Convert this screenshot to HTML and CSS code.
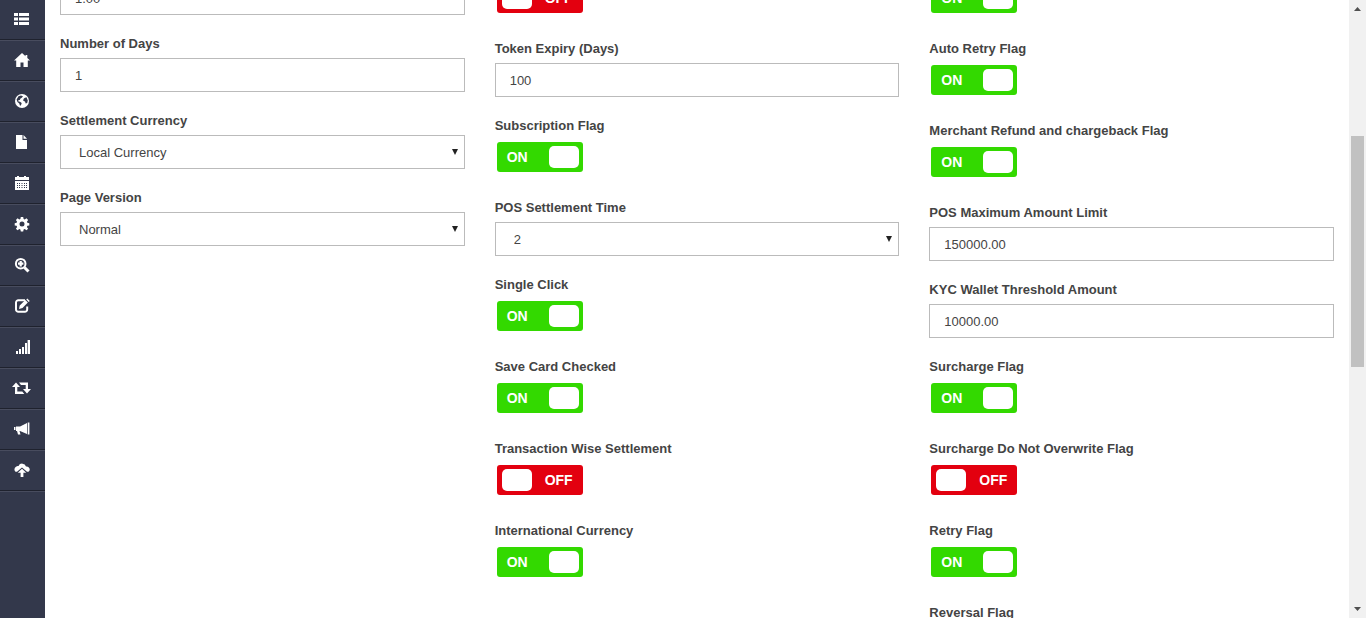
FILE: index.html
```html
<!DOCTYPE html>
<html lang="en">
<head>
<meta charset="utf-8">
<title>Merchant Settings</title>
<link rel="stylesheet" href="styles.css">
</head>
<body>
<div class="app">
  <nav class="sidebar" aria-label="Main">
    <a class="nav-item" href="#list" aria-label="List"><svg class="icon" viewBox="0 0 16 16"><path d="M0 2h4v3H0zM5 2h10v3H5zM0 6.500h4v3H0zM5 6.500h10v3H5zM0 11h4v3H0zM5 11h10v3H5z"/></svg></a>
    <a class="nav-item" href="#home" aria-label="Home"><svg class="icon" viewBox="0 0 16 16"><path d="M8 1L0 8.400h2.200V15h4.300v-4.500h3V15h4.300V8.400H16L13.300 6V3h-1.800v1.300z"/></svg></a>
    <a class="nav-item" href="#globe" aria-label="Regions"><svg class="icon" viewBox="0 0 16 16"><circle cx="8" cy="8" r="7"/><path class="cut" d="M4.500 3.200L7 2.500l2 .8-1.200 1.500-1.300.7-.7 1.500-1.600.3.300 1.200 1.500.2 1.700 1.200-.4 1.500-1.200 1.500-.8-2.500L3.500 9 2.600 6.500zM10.500 5l2-.7 1.300 3.200-.6 2.600-1.500.5-.7-2-1.800-.8.300-1.700z"/></svg></a>
    <a class="nav-item" href="#file" aria-label="Documents"><svg class="icon" viewBox="0 0 16 16"><path d="M2 1h6.500v5H13v9H2z"/><path d="M9.500 1L13 4.800H9.500z"/></svg></a>
    <a class="nav-item" href="#calendar" aria-label="Calendar"><svg class="icon" viewBox="0 0 16 16"><path d="M1 2h2V1h2v1h5V1h2v1h3v3H1zM1 6h14v9H1z"/><path class="cut" d="M3 8h1v1H3zM5 8h1v1H5zM7.500 8h1v1h-1zM10 8h1v1h-1zM12 8h1v1h-1zM3 10h1v1H3zM5 10h1v1H5zM7.500 10h1v1h-1zM10 10h1v1h-1zM12 10h1v1h-1zM3 12h1v1H3zM5 12h1v1H5zM7.500 12h1v1h-1zM10 12h1v1h-1zM12 12h1v1h-1z"/></svg></a>
    <a class="nav-item" href="#settings" aria-label="Settings"><svg class="icon" viewBox="0 0 16 16"><path fill-rule="evenodd" d="M6.800 1h2.400l.4 2 1.100.5 1.800-1.200 1.600 1.700-1.200 1.700.5 1.100 1.900.4v2.200l-1.900.4-.5 1.100 1.200 1.800-1.600 1.600-1.800-1.200-1.100.5-.4 1.900H6.800l-.4-1.900-1.100-.5-1.700 1.200-1.700-1.600 1.200-1.800-.5-1.100-1.900-.4V7.200l1.900-.4.5-1.100L1.900 4l1.700-1.700 1.700 1.200 1.100-.5zM8 5.600a2.500 2.500 0 100 5 2.500 2.500 0 000-5z"/></svg></a>
    <a class="nav-item" href="#search" aria-label="Search"><svg class="icon" viewBox="0 0 16 16"><circle class="stroke" cx="6.700" cy="6.700" r="4.800"/><path class="stroke thick" d="M10.500 10.500l4 4"/><path d="M5.600 4h2.200v1.600h1.600v2.200H7.800v1.600H5.600V7.800H4V5.600h1.600z"/></svg></a>
    <a class="nav-item" href="#edit" aria-label="Edit"><svg class="icon" viewBox="0 0 16 16"><path class="stroke" d="M11 2.200H4.500A2.400 2.400 0 002 4.700v6.600a2.400 2.400 0 002.500 2.500h6.200a2.400 2.400 0 002.500-2.500V8.500"/><path d="M5 11l.7-3.500L11.300 2l2.500 2.500-5.300 5.400zM12.300 1.500l1-.9 2.500 2.400-1.100 1z"/></svg></a>
    <a class="nav-item" href="#reports" aria-label="Reports"><svg class="icon" viewBox="0 0 16 16"><path d="M2 12h2v3H2zM5 10h2v5H5zM8 8h2v7H8zM11 4h2v11h-2zM13 1h3v14h-3z"/><path class="cut" d="M13 1h.6v14H13z"/></svg></a>
    <a class="nav-item" href="#transfers" aria-label="Transfers"><svg class="icon icon-wide" viewBox="0 0 19 16"><path d="M4 2.500L8 7H5.300v4.500h5l2 2.500H3V7H0zM7 2.500h9V9h3l-4 4.500L11 9h2.700V5H9z"/></svg></a>
    <a class="nav-item" href="#campaigns" aria-label="Campaigns"><svg class="icon" viewBox="0 0 16 16"><path d="M0 6h1.500v3H0zM2 5.500h4V10H2zM6 5.500L13 2v11L6 10zM13.700 1.500h1.700v12h-1.700zM3 10h2.500l1 3.500H4z"/></svg></a>
    <a class="nav-item" href="#upload" aria-label="Upload"><svg class="icon" viewBox="0 0 16 16"><path d="M1.500 9.800A3.200 3.200 0 012 4.700 3 3 0 014.500 4 4 4 0 0112 4.500a3 3 0 012.500 5.300H13L8 5.500 3 9.800z"/><path d="M8 6.800l4.200 4H9.400V15H6.600v-4.200H3.800z"/></svg></a>
  </nav>

  <main class="content">
    <form class="form">
      <div class="column">
        <div class="field"><label class="caption" for="rate">Rate</label><input class="control" id="rate" type="text" value="1.00"></div>
        <div class="field"><label class="caption" for="days">Number of Days</label><input class="control" id="days" type="text" value="1"></div>
        <div class="field"><label class="caption" for="currency">Settlement Currency</label>
          <div class="select-box"><select class="control select" id="currency"><option>Local Currency</option></select><svg class="caret" viewBox="0 0 6 6"><path d="M0 0h6L3 6z"/></svg></div></div>
        <div class="field"><label class="caption" for="version">Page Version</label>
          <div class="select-box"><select class="control select" id="version"><option>Normal</option></select><svg class="caret" viewBox="0 0 6 6"><path d="M0 0h6L3 6z"/></svg></div></div>
      </div>

      <div class="column">
        <div class="field toggle-field"><label class="caption" for="token">Token Flag</label>
          <label class="switch"><input class="switch-input" id="token" type="checkbox"><span class="on">ON</span><span class="knob"></span><span class="off">OFF</span></label></div>
        <div class="field"><label class="caption" for="expiry">Token Expiry (Days)</label><input class="control" id="expiry" type="text" value="100"></div>
        <div class="field toggle-field"><label class="caption" for="subscription">Subscription Flag</label>
          <label class="switch"><input class="switch-input" id="subscription" type="checkbox" checked><span class="on">ON</span><span class="knob"></span><span class="off">OFF</span></label></div>
        <div class="field"><label class="caption" for="pos-time">POS Settlement Time</label>
          <div class="select-box"><select class="control select" id="pos-time"><option>2</option></select><svg class="caret" viewBox="0 0 6 6"><path d="M0 0h6L3 6z"/></svg></div></div>
        <div class="field toggle-field"><label class="caption" for="single">Single Click</label>
          <label class="switch"><input class="switch-input" id="single" type="checkbox" checked><span class="on">ON</span><span class="knob"></span><span class="off">OFF</span></label></div>
        <div class="field toggle-field"><label class="caption" for="save-card">Save Card Checked</label>
          <label class="switch"><input class="switch-input" id="save-card" type="checkbox" checked><span class="on">ON</span><span class="knob"></span><span class="off">OFF</span></label></div>
        <div class="field toggle-field"><label class="caption" for="wise">Transaction Wise Settlement</label>
          <label class="switch"><input class="switch-input" id="wise" type="checkbox"><span class="on">ON</span><span class="knob"></span><span class="off">OFF</span></label></div>
        <div class="field toggle-field"><label class="caption" for="international">International Currency</label>
          <label class="switch"><input class="switch-input" id="international" type="checkbox" checked><span class="on">ON</span><span class="knob"></span><span class="off">OFF</span></label></div>
      </div>

      <div class="column">
        <div class="field toggle-field"><label class="caption" for="flag">Flag</label>
          <label class="switch"><input class="switch-input" id="flag" type="checkbox" checked><span class="on">ON</span><span class="knob"></span><span class="off">OFF</span></label></div>
        <div class="field toggle-field"><label class="caption" for="auto-retry">Auto Retry Flag</label>
          <label class="switch"><input class="switch-input" id="auto-retry" type="checkbox" checked><span class="on">ON</span><span class="knob"></span><span class="off">OFF</span></label></div>
        <div class="field toggle-field"><label class="caption" for="refund">Merchant Refund and chargeback Flag</label>
          <label class="switch"><input class="switch-input" id="refund" type="checkbox" checked><span class="on">ON</span><span class="knob"></span><span class="off">OFF</span></label></div>
        <div class="field"><label class="caption" for="pos-max">POS Maximum Amount Limit</label><input class="control" id="pos-max" type="text" value="150000.00"></div>
        <div class="field"><label class="caption" for="kyc">KYC Wallet Threshold Amount</label><input class="control" id="kyc" type="text" value="10000.00"></div>
        <div class="field toggle-field"><label class="caption" for="surcharge">Surcharge Flag</label>
          <label class="switch"><input class="switch-input" id="surcharge" type="checkbox" checked><span class="on">ON</span><span class="knob"></span><span class="off">OFF</span></label></div>
        <div class="field toggle-field"><label class="caption" for="overwrite">Surcharge Do Not Overwrite Flag</label>
          <label class="switch"><input class="switch-input" id="overwrite" type="checkbox"><span class="on">ON</span><span class="knob"></span><span class="off">OFF</span></label></div>
        <div class="field toggle-field"><label class="caption" for="retry">Retry Flag</label>
          <label class="switch"><input class="switch-input" id="retry" type="checkbox" checked><span class="on">ON</span><span class="knob"></span><span class="off">OFF</span></label></div>
        <div class="field toggle-field"><label class="caption" for="reversal">Reversal Flag</label>
          <label class="switch"><input class="switch-input" id="reversal" type="checkbox" checked><span class="on">ON</span><span class="knob"></span><span class="off">OFF</span></label></div>
      </div>
    </form>
  </main>

  <div class="scrollbar" aria-hidden="true">
    <svg class="scroll-arrow" viewBox="0 0 17 17"><path d="M5 11h7L8.500 7z"/></svg>
    <div class="track"><div class="thumb"></div></div>
    <svg class="scroll-arrow" viewBox="0 0 17 17"><path d="M5 6h7L8.500 10z"/></svg>
  </div>
</div>
</body>
</html>
```

FILE: styles.css
```css
* { box-sizing: border-box; }

body {
  margin: 0;
  background: #fff;
  color: #444;
  font: 13px/20px "Liberation Sans", Arial, sans-serif;
}

.app {
  display: flex;
  height: 100vh;
  overflow: hidden;
}

/* Sidebar */
.sidebar {
  flex: 0 0 45px;
  background: #33384b;
}

.nav-item {
  display: flex;
  align-items: center;
  justify-content: center;
  height: 41px;
  padding: 0 2px 2px 0;
  border-top: 1px solid #484c5e;
  border-bottom: 1px solid #1f222e;
}

.nav-item:first-child {
  height: 40px;
  border-top: 0;
}

.nav-item:last-child { box-shadow: 0 1px #484c5e; }

.icon {
  width: 16px;
  height: 16px;
  fill: #fff;
}

.icon-wide { width: 19px; }
.icon .cut { fill: #33384b; }

.icon .stroke {
  fill: none;
  stroke: #fff;
  stroke-width: 2;
}

.icon .thick { stroke-width: 3; }

/* Form, scrolled part of the way down */
.content {
  flex: 1;
  min-width: 0;
  overflow: hidden;
}

.form {
  display: grid;
  grid-template-columns: repeat(3, minmax(0, 1fr));
  gap: 30px;
  margin-top: -44px;
  padding: 0 15px;
}

.field {
  display: flex;
  flex-direction: column;
  gap: 3px;
  margin-bottom: 18px;
}

.toggle-field {
  align-items: flex-start;
  gap: 5px;
  margin-bottom: 25px;
}

.caption {
  font-weight: 700;
  line-height: 22px;
}

.control {
  display: block;
  width: 100%;
  height: 34px;
  padding: 0 14px;
  border: 1px solid #bbb;
  border-radius: 0;
  background: #fff;
  color: #444;
  font: inherit;
}

.select-box { position: relative; }

.select {
  padding: 2px 18px 0;
  appearance: none;
}

.caret {
  position: absolute;
  top: 14px;
  right: 7px;
  width: 6px;
  height: 6px;
  fill: #222;
  pointer-events: none;
}

/* Switch */
.switch {
  display: flex;
  align-items: center;
  justify-content: space-between;
  width: 86px;
  height: 30px;
  margin-left: 2px;
  padding: 0 10px 0 5px;
  border-radius: 3px;
  background: #e3000f;
  color: #fff;
  font-size: 14px;
  font-weight: 700;
}

.switch:has(:checked) {
  padding: 0 4px 0 10px;
  background: #33d900;
}

.switch-input {
  position: absolute;
  opacity: 0;
  pointer-events: none;
}

.knob {
  width: 30px;
  height: 22px;
  border-radius: 5px;
  background: #fff;
}

.on { display: none; }
.switch-input:checked ~ .on { display: block; }
.switch-input:checked ~ .off { display: none; }

/* Scrollbar */
.scrollbar {
  display: flex;
  flex: 0 0 17px;
  flex-direction: column;
  background: #f1f1f1;
}

.scroll-arrow {
  flex: none;
  width: 17px;
  height: 17px;
  fill: #505050;
}

.track {
  display: grid;
  flex: 1;
  grid-template-rows: 119fr 231fr 234fr;
  padding: 0 2px;
}

.thumb {
  grid-row: 2;
  background: #c1c1c1;
}
```
